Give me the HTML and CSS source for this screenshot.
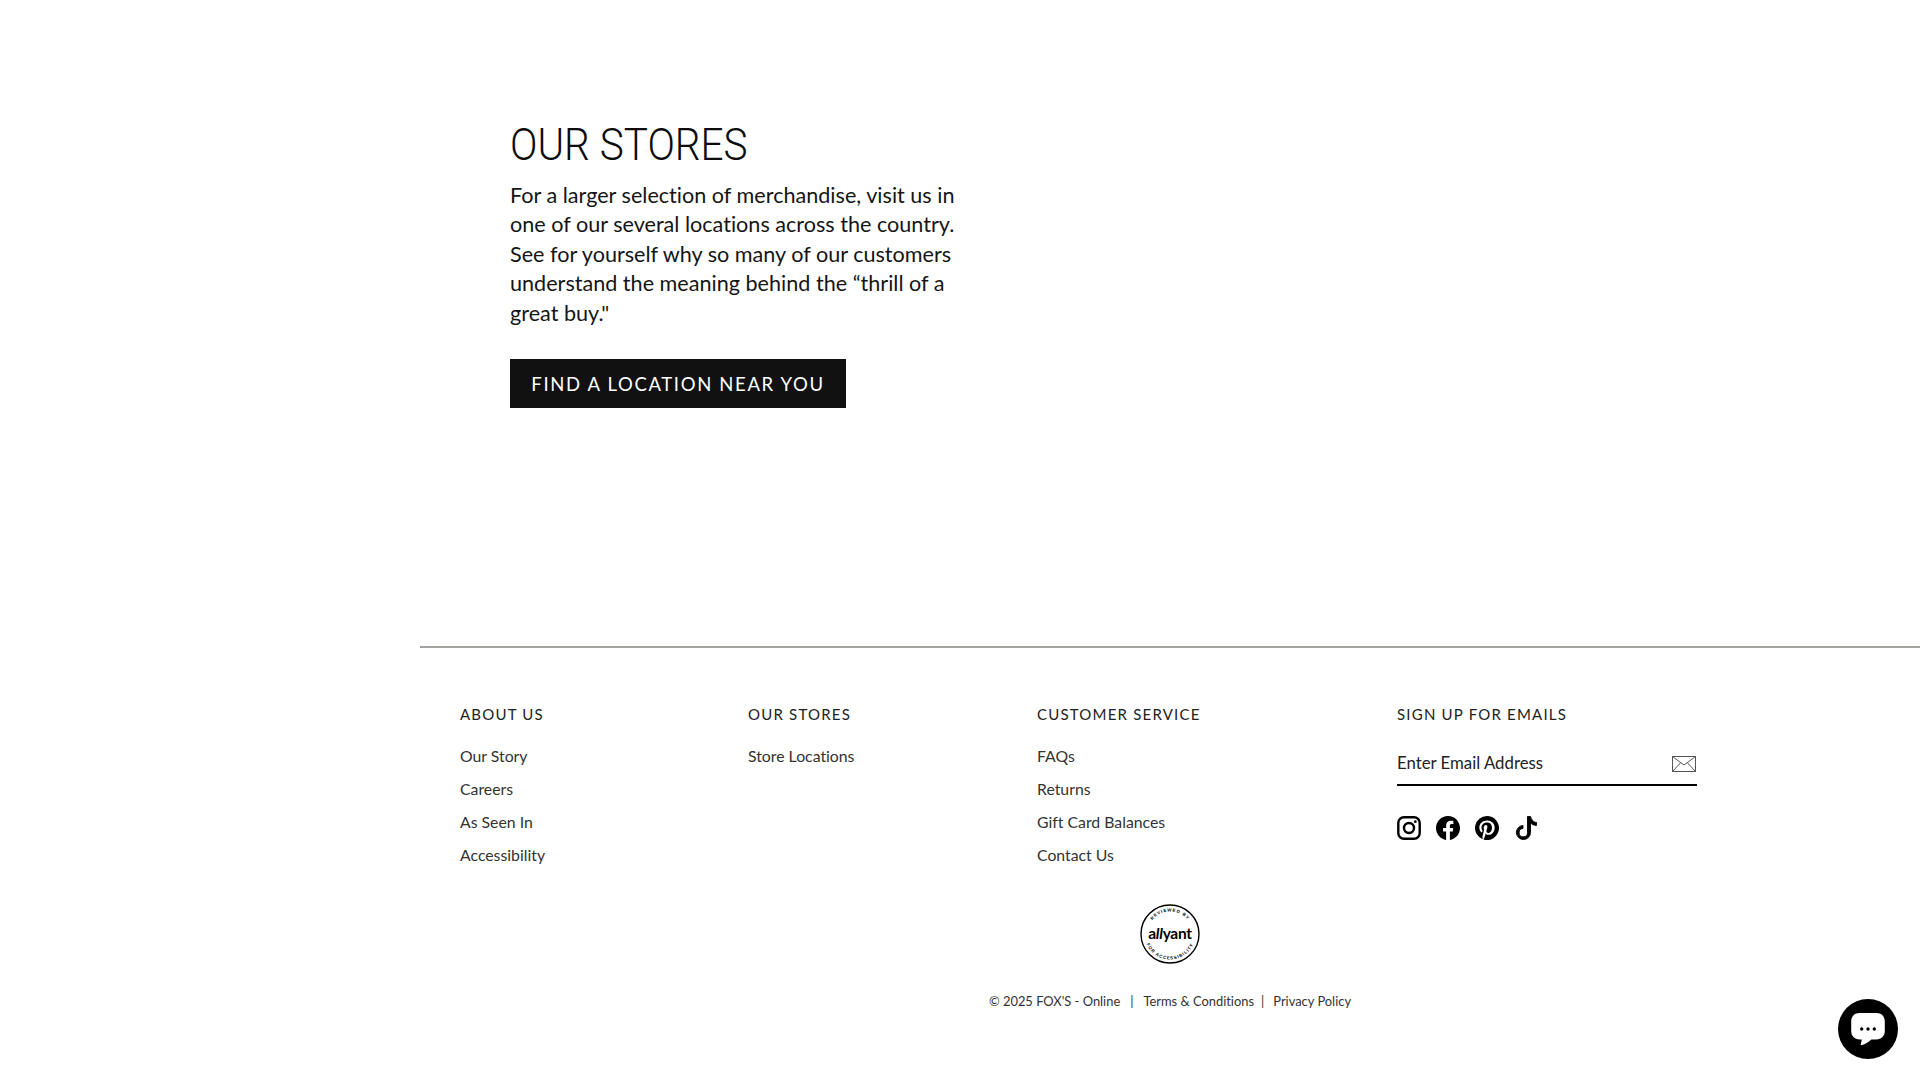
FILE: index.html
```html
<!DOCTYPE html>
<html lang="en">
<head>
<meta charset="utf-8">
<title>Our Stores</title>
<link rel="stylesheet" href="styles.css">
</head>
<body>
<main class="page">
  <section class="hero">
    <h1 class="hero-title">OUR STORES</h1>
    <p class="hero-copy">For a larger selection of merchandise, visit us in<br>one of our several locations across the country.<br>See for yourself why so many of our customers<br>understand the meaning behind the “thrill of a<br>great buy."</p>
    <a class="hero-btn">FIND A LOCATION NEAR YOU</a>
  </section>
  <footer class="footer">
    <div class="cols">
      <nav class="col">
        <h2 class="col-title">ABOUT US</h2>
        <a class="col-link">Our Story</a>
        <a class="col-link">Careers</a>
        <a class="col-link">As Seen In</a>
        <a class="col-link">Accessibility</a>
      </nav>
      <nav class="col">
        <h2 class="col-title">OUR STORES</h2>
        <a class="col-link">Store Locations</a>
      </nav>
      <nav class="col">
        <h2 class="col-title">CUSTOMER SERVICE</h2>
        <a class="col-link">FAQs</a>
        <a class="col-link">Returns</a>
        <a class="col-link">Gift Card Balances</a>
        <a class="col-link">Contact Us</a>
      </nav>
      <div class="col">
        <h2 class="col-title">SIGN UP FOR EMAILS</h2>
        <div class="email">
          <span class="email-text">Enter Email Address</span>
          <svg class="email-icon" viewBox="0 0 24 16" width="24" height="16" fill="none" stroke="#555" stroke-width="1">
            <rect x=".5" y=".5" width="23" height="15"/>
            <path d="M.5.5 12 9 23.5.5M.5 15.500 8.500 6.800M23.500 15.500 15.500 6.800"/>
          </svg>
        </div>
        <div class="social">
          <svg class="social-icon" viewBox="0 0 24 24" fill="none" stroke="#000">
            <rect x="1.300" y="1.300" width="21.400" height="21.400" rx="5.600" stroke-width="2.400"/>
            <circle cx="12" cy="12" r="5" stroke-width="2.400"/>
            <circle cx="18.300" cy="5.700" r="1.400" fill="#000" stroke="none"/>
          </svg>
          <svg class="social-icon" viewBox="0 0 16 16" fill="#000">
            <path d="M16 8.049c0-4.446-3.582-8.05-8-8.05C3.58 0-.002 3.603-.002 8.05c0 4.017 2.926 7.347 6.75 7.951v-5.625h-2.03V8.05H6.75V6.275c0-2.017 1.195-3.131 3.022-3.131.876 0 1.791.157 1.791.157v1.98h-1.009c-.993 0-1.303.621-1.303 1.258v1.51h2.218l-.354 2.326H9.25V16c3.824-.604 6.75-3.934 6.75-7.951"/>
          </svg>
          <svg class="social-icon" viewBox="0 0 16 16" fill="#000">
            <path d="M8 0a8 8 0 0 0-2.915 15.452c-.07-.633-.134-1.606.027-2.297.146-.625.938-3.977.938-3.977s-.239-.479-.239-1.187c0-1.113.645-1.943 1.448-1.943.682 0 1.012.512 1.012 1.127 0 .686-.437 1.712-.663 2.663-.188.796.4 1.446 1.185 1.446 1.422 0 2.515-1.5 2.515-3.664 0-1.915-1.377-3.254-3.342-3.254-2.276 0-3.612 1.707-3.612 3.471 0 .688.265 1.425.595 1.826a.24.24 0 0 1 .056.23c-.061.252-.196.796-.222.907-.035.146-.116.177-.268.107-1-.465-1.624-1.926-1.624-3.1 0-2.523 1.834-4.84 5.286-4.84 2.775 0 4.932 1.977 4.932 4.62 0 2.757-1.739 4.976-4.151 4.976-.811 0-1.573-.421-1.834-.919l-.498 1.902c-.181.695-.669 1.566-.995 2.097A8 8 0 1 0 8 0"/>
          </svg>
          <svg class="social-icon" viewBox="0 0 16 16" fill="#000" stroke="#000" stroke-width=".6">
            <path d="M9 .3h1.980c.144.715.54 1.617 1.235 2.512C12.895 3.689 13.797 4.300 15 4.300v2c-1.753 0-3.070-.814-4-1.829V11a4.700 4.700 0 1 1-5-4.700v2a2.800 2.800 0 1 0 3 2.700z"/>
          </svg>
        </div>
      </div>
    </div>
    <div class="badge-row">
      <svg class="badge" viewBox="0 0 60 60">
        <defs>
          <path id="arcTop" d="M7.500 30a22.500 22.500 0 0 1 45 0"/>
          <path id="arcBot" d="M4.500 30a25.500 25.500 0 0 0 51 0"/>
        </defs>
        <circle cx="30" cy="30" r="29" fill="#fff" stroke="#000" stroke-width="1.400"/>
        <text class="badge-small"><textPath href="#arcTop" startOffset="50%" text-anchor="middle">REVIEWED BY</textPath></text>
        <text class="badge-small"><textPath href="#arcBot" startOffset="50%" text-anchor="middle">FOR ACCESSIBILITY</textPath></text>
        <text class="badge-main" x="30" y="35" text-anchor="middle">a<tspan class="badge-slant">ll</tspan>yant</text>
      </svg>
    </div>
    <p class="legal"><span>© 2025 FOX'S - Online</span><span class="sep-a">|</span><span>Terms &amp; Conditions</span><span class="sep-b">|</span><span>Privacy Policy</span></p>
  </footer>
</main>
<div class="chat">
  <svg viewBox="0 0 30 30" width="42" height="42">
    <path fill="#fff" d="M9 3.500h12c3.600 0 6 2.400 6 6v7c0 3.600-2.400 6-6 6h-3.600c-2.200 2-4.400 3.300-6.700 4-.9.200-1.100-.4-.8-1l.7-3H9c-3.600 0-6-2.400-6-6v-7c0-3.600 2.400-6 6-6z"/>
    <circle cx="10.500" cy="15" r="1.200" fill="#000"/><circle cx="15" cy="15" r="1.200" fill="#000"/><circle cx="19.500" cy="15" r="1.200" fill="#000"/>
  </svg>
</div>
</body>
</html>
```
FILE: styles.css
```css
* { box-sizing: border-box; }
html, body { margin: 0; height: 100%; background: #fff; overflow: hidden; }
body { font-family: "Lato", "Noto Sans", sans-serif; color: #111; font-variant-ligatures: none; }
.page { padding-left: 420px; display: flex; flex-direction: column; }
.hero { height: 646px; padding: 119px 0 0 90px; display: flex; flex-direction: column; align-items: flex-start; }
.hero-title { margin: 0; font-family: "Roboto", sans-serif; font-weight: 300; font-size: 44px; line-height: 52px; color: #0c0c0c; transform: scaleX(.921); transform-origin: left center; }
.hero-copy { margin: 10px 0 0; font-size: 21.600px; line-height: 29.400px; color: #151515; }
.hero-btn { margin-top: 31px; width: 336px; height: 49px; background: #111; color: #fff; font-size: 18.500px; letter-spacing: 1.650px; display: flex; align-items: center; justify-content: center; }
.footer { border-top: 2px solid #a3a3a0; padding: 55px 0 0 40px; }
.cols { display: grid; grid-template-columns: 288px 289px 360px 300px; }
.col { display: flex; flex-direction: column; align-items: flex-start; }
.col-title { margin: 0 0 14px; font-size: 15px; font-weight: 400; line-height: 22px; letter-spacing: 1.200px; color: #222; }
.col-link { font-size: 15.800px; line-height: 33px; color: #333; }
.email { width: 300px; height: 40px; border-bottom: 2px solid #000; display: flex; justify-content: space-between; align-items: flex-start; padding-top: 5px; margin-top: 7px; }
.email-text { font-size: 16.800px; line-height: 24px; color: #222; }
.email-icon { margin: 5px 1px 0 0; }
.social { display: flex; gap: 15px; margin-top: 30px; }
.social-icon { width: 24px; height: 24px; display: block; }
.badge-row { display: flex; justify-content: center; margin: 33px 40px 0 0; }
.badge { width: 60px; height: 60px; display: block; }
.badge-small { font-family: "Liberation Sans", sans-serif; font-size: 4.400px; font-weight: 700; letter-spacing: .9px; }
.badge-main { font-family: "Lato", sans-serif; font-size: 15.500px; font-weight: 700; letter-spacing: -.3px; }
.badge-slant { font-style: italic; }
.legal { margin: 27px 40px 0 0; display: flex; justify-content: center; font-size: 12.900px; line-height: 20px; color: #333; }
.sep-a { margin: 0 10px; }
.sep-b { margin: 0 9px 0 7px; }
.chat { position: fixed; right: 22px; bottom: 21px; width: 60px; height: 60px; border-radius: 50%; background: #000; display: flex; align-items: center; justify-content: center; }
```
